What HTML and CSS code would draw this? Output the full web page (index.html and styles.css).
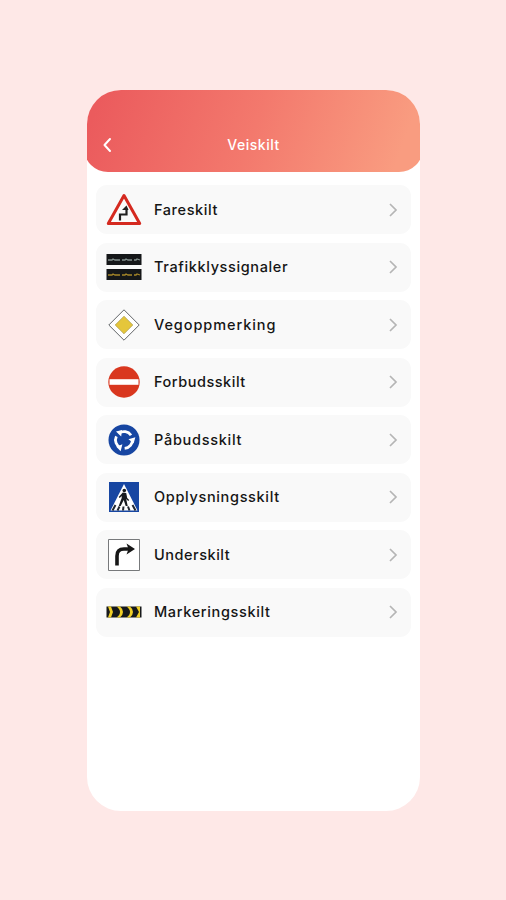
FILE: index.html
```
<!DOCTYPE html>
<html lang="no">
<head>
<meta charset="utf-8">
<title>Veiskilt</title>
<link rel="stylesheet" href="styles.css">
</head>
<body>
<main class="phone">
  <header class="header">
    <svg class="back" viewBox="0 0 10 16"><path d="M8 2 2.500 8 8 14"/></svg>
    <h1 class="title">Veiskilt</h1>
  </header>
  <ul class="list">
    <li class="row">
      <svg class="icon" viewBox="0 0 36 36"><path d="M18 3.500 33.700 31.500H2.300Z" fill="#fbfbfb" stroke="#d52a20" stroke-width="3" stroke-linejoin="round"/><path d="M14 28.500v-6h6.500v-6" fill="none" stroke="#222" stroke-width="2.200"/><path d="m16 18 4.500-4.500 2 4.500z" fill="#222"/></svg>
      <span class="label fare">Fareskilt</span>
      <svg class="chevron" viewBox="0 0 10 16"><path d="m2 2 6 6-6 6"/></svg>
    </li>
    <li class="row">
      <svg class="icon" viewBox="0 0 36 36"><path d="M.5 5h35v11H.5zM.5 20h35v11H.5z" fill="#151719"/><path d="M2 11h4l1-1 2 1h5m2 0h3l1-1 2 1h4m2 0h2l1-1 3 1" fill="none" stroke="#83908d" stroke-width="1.300"/><path d="M2 26h4l1-1 2 1h5m2 0h3l1-1 2 1h4m2 0h2l1-1 3 1" fill="none" stroke="#a58628" stroke-width="1.300"/></svg>
      <span class="label trafikk">Trafikklyssignaler</span>
      <svg class="chevron" viewBox="0 0 10 16"><path d="m2 2 6 6-6 6"/></svg>
    </li>
    <li class="row">
      <svg class="icon" viewBox="0 0 36 36"><path d="M18 2.800 33.200 18 18 33.200 2.800 18Z" fill="#fff" stroke="#626568"/><path d="M18 9.200 26.800 18 18 26.800 9.200 18Z" fill="#e5c63b" stroke="#a8994b" stroke-width=".7"/></svg>
      <span class="label veg">Vegoppmerking</span>
      <svg class="chevron" viewBox="0 0 10 16"><path d="m2 2 6 6-6 6"/></svg>
    </li>
    <li class="row">
      <svg class="icon" viewBox="0 0 36 36"><circle cx="18" cy="18" r="15.700" fill="#d9371f"/><path d="M3.500 15.200h29v5.600h-29z" fill="#fff"/></svg>
      <span class="label forbud">Forbudsskilt</span>
      <svg class="chevron" viewBox="0 0 10 16"><path d="m2 2 6 6-6 6"/></svg>
    </li>
    <li class="row">
      <svg class="icon" viewBox="0 0 36 36"><circle cx="18" cy="18" r="15.500" fill="#1746a2"/><g id="turn"><path d="M13 11.200A8.500 8.500 0 0 1 25 13.200" fill="none" stroke="#fff" stroke-width="2.800"/><path d="m10 9.500 6-1.500-.8 6.500z" fill="#fff"/></g><use href="#turn" transform="rotate(120 18 18)"/><use href="#turn" transform="rotate(240 18 18)"/></svg>
      <span class="label pabud">Påbudsskilt</span>
      <svg class="chevron" viewBox="0 0 10 16"><path d="m2 2 6 6-6 6"/></svg>
    </li>
    <li class="row">
      <svg class="icon" viewBox="0 0 36 36"><path d="M3 3h30v30H3z" fill="#1746a2"/><path d="m18 5 13.500 26.500h-27z" fill="#fff"/><circle cx="18.300" cy="11.500" r="1.800" fill="#181b20"/><path d="m16.800 13.500 3.400.5 1 5 2 2-1 1-2-2 1.500 7h-2l-2-6-3 6h-2l3-8v-2l-2 2-1-1z" fill="#181b20"/><path d="m9.500 26-3 5.500m7-4-2 4m6-4-.5 4m5-4 1.500 4m3-5.500 3 5.500" stroke="#222831" stroke-width="2"/></svg>
      <span class="label opplys">Opplysningsskilt</span>
      <svg class="chevron" viewBox="0 0 10 16"><path d="m2 2 6 6-6 6"/></svg>
    </li>
    <li class="row">
      <svg class="icon" viewBox="0 0 36 36"><path d="M2.500 2.500h31v31h-31z" fill="#fff" stroke="#77797b"/><path d="M11 28.500V19q0-7 7-7h6" fill="none" stroke="#171717" stroke-width="3.600"/><path d="M20.500 6.500 29 12l-8.500 5.500 2-5.500z" fill="#171717"/></svg>
      <span class="label under">Underskilt</span>
      <svg class="chevron" viewBox="0 0 10 16"><path d="m2 2 6 6-6 6"/></svg>
    </li>
    <li class="row">
      <svg class="icon" viewBox="0 0 36 36"><path d="M.5 12.500h35v11H.5z" fill="#17191b"/><path d="M2 12.500h3l2 5.500-2 5.500H2L4 18zM10.500 12.500h3.500q3 2.500 3 5.500t-3 5.500h-3.500q3.500-2.500 3.500-5.500t-3.500-5.500zM20.500 12.500H24q3 2.500 3 5.500t-3 5.500h-3.500q3.500-2.500 3.500-5.500t-3.500-5.500zM30 12.500h4v11h-4l3-5.500z" fill="#f0cf27"/></svg>
      <span class="label mark">Markeringsskilt</span>
      <svg class="chevron" viewBox="0 0 10 16"><path d="m2 2 6 6-6 6"/></svg>
    </li>
  </ul>
</main>
</body>
</html>
```
FILE: styles.css
```
* { box-sizing: border-box; }
body {
  margin: 0;
  min-height: 900px;
  padding: 90px 86px 0 87px;
  background: #fee8e7;
  font-family: Inter, "Liberation Sans", sans-serif;
}
.phone {
  height: 720.5px;
  border-radius: 34px;
  background: #fff;
  overflow: hidden;
}
.header {
  display: grid;
  grid-template-columns: 40px 1fr 40px;
  align-items: center;
  height: 82px;
  margin: 0 -3px;
  padding: 28px 3px 0;
  border-radius: 0 0 24px 24px;
  background: linear-gradient(110deg, #eb5b5d 5%, #f3796d 50%, #f99c80 92%);
}
.back {
  width: 10px;
  height: 16px;
  margin-left: 15px;
  fill: none;
  stroke: #fff;
  stroke-width: 2;
  stroke-linecap: round;
  stroke-linejoin: round;
}
.title {
  margin: 0;
  text-align: center;
  color: #fff;
  font-size: 14px;
  font-weight: 500;
  line-height: 20px;
  letter-spacing: .5px;
}
.list {
  display: flex;
  flex-direction: column;
  gap: 8.5px;
  margin: 0;
  padding: 13px 9px 0;
  list-style: none;
}
.row {
  display: flex;
  align-items: center;
  height: 49px;
  padding: 0 13px 0 10px;
  border-radius: 11px;
  background: #f9f9f9;
}
.icon { width: 36px; height: 36px; flex: none; }
.label {
  margin-left: 12px;
  color: #151515;
  font-size: 14.5px;
  font-weight: 500;
  line-height: 20px;
  white-space: nowrap;
}
.fare { letter-spacing: .58px; }
.trafikk { letter-spacing: .63px; }
.veg { letter-spacing: .92px; }
.forbud { letter-spacing: .53px; }
.pabud { letter-spacing: .72px; }
.opplys { letter-spacing: .66px; }
.under { letter-spacing: .53px; }
.mark { letter-spacing: .64px; }
.chevron {
  width: 10px;
  height: 16px;
  margin-left: auto;
  fill: none;
  stroke: #b5b5b5;
  stroke-width: 1.7;
}
```
